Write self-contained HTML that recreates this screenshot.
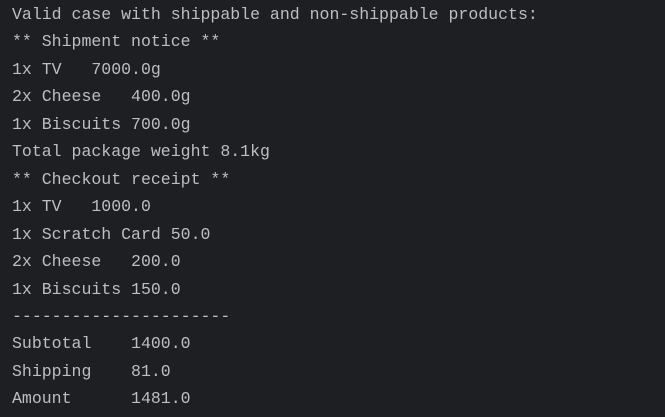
<!DOCTYPE html>
<html><head><meta charset="utf-8"><style>
html,body{margin:0;padding:0;background:#1e1f22;width:665px;height:417px;overflow:hidden}
pre{margin:0;position:absolute;left:12px;top:1px;font-family:"Liberation Mono",monospace;font-size:16.55px;line-height:27.45px;color:#bcbec4}
</style></head><body><pre>Valid case with shippable and non-shippable products:
** Shipment notice **
1x TV   7000.0g
2x Cheese   400.0g
1x Biscuits 700.0g
Total package weight 8.1kg
** Checkout receipt **
1x TV   1000.0
1x Scratch Card 50.0
2x Cheese   200.0
1x Biscuits 150.0
----------------------
Subtotal    1400.0
Shipping    81.0
Amount      1481.0</pre></body></html>
